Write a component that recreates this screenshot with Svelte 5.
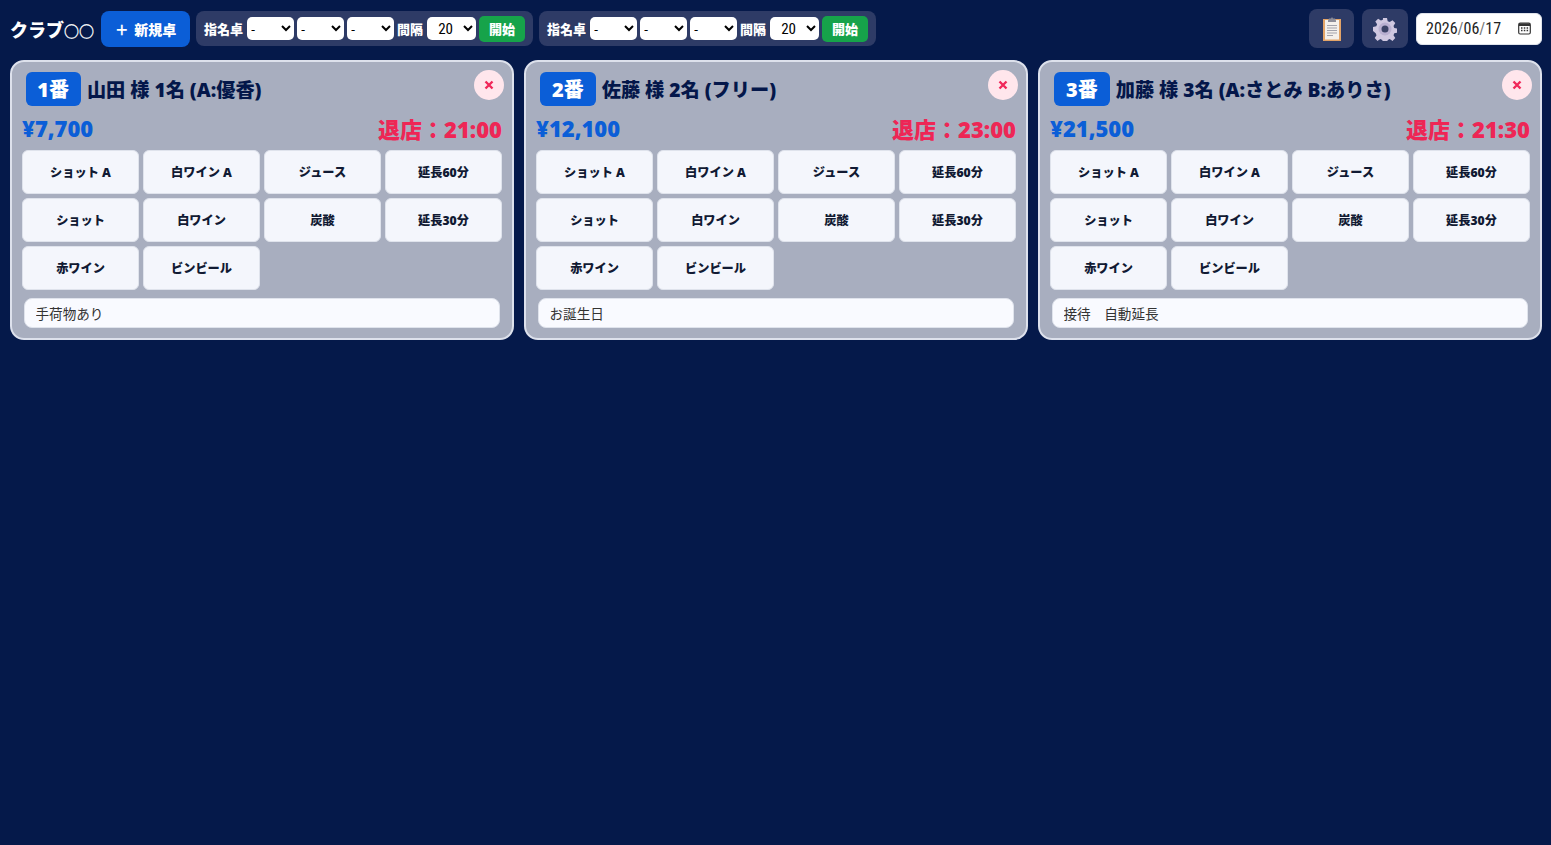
<script>
	const tables = [
		{ no: 1, name: '山田 様 1名 (A:優香)', price: '¥7,700', leave: '退店：21:00', memo: '手荷物あり' },
		{ no: 2, name: '佐藤 様 2名 (フリー)', price: '¥12,100', leave: '退店：23:00', memo: 'お誕生日' },
		{ no: 3, name: '加藤 様 3名 (A:さとみ B:ありさ)', price: '¥21,500', leave: '退店：21:30', memo: '接待　自動延長' }
	];
	const items = ['ショット A', '白ワイン A', 'ジュース', '延長60分', 'ショット', '白ワイン', '炭酸', '延長30分', '赤ワイン', 'ビンビール'];
</script>

<div class="page">
	<header class="topbar">
		<span class="title">クラブ<span class="marks">○○</span></span>
		<button class="new-btn">＋ 新規卓</button>
		{#each [0, 1] as g}
			<div class="group">
				<span class="label">指名卓</span>
				{#each [0, 1, 2] as s}
					<select class="sel"><option>-</option></select>
				{/each}
				<span class="label">間隔</span>
				<select class="sel small"><option>20</option></select>
				<button class="start">開始</button>
			</div>
		{/each}
		<button class="icon-btn first" aria-label="記録">
			<svg width="20" height="24" viewBox="0 0 20 24">
				<rect x="1" y="2" width="18" height="22" fill="#e3a468" />
				<rect x="3" y="3" width="14" height="19.500" fill="#f4f0ec" />
				<path d="M6 3.500 L7 1.500 H9 L10 0 L11 1.500 H13 L14 3.500 V5 H6Z" fill="#8d8d99" />
				<path d="M5 8.500H15M5 11H15M5 13.500H15M5 16H15M5 18.500H11" stroke="#a3a3ad" stroke-width="1" />
			</svg>
		</button>
		<button class="icon-btn" aria-label="設定">
			<svg width="24" height="24" viewBox="0 0 24 24">
				<path d="M10 1h4l.7 3.300 2 .8 2.800-1.800 2.800 2.800-1.800 2.800.8 2 3.300.7v4l-3.300.7-.8 2 1.800 2.800-2.800 2.800-2.800-1.800-2 .8-.7 3.300h-4l-.7-3.300-2-.8-2.800 1.800-2.800-2.800 1.800-2.800-.8-2L0 14v-4l3.300-.7.800-2L2.300 4.500l2.800-2.800 2.800 1.800 2-.8z" fill="#cfc8e0" />
				<circle cx="12" cy="12" r="6.500" fill="#b9b0d0" />
				<circle cx="12" cy="12" r="3.500" fill="#3b4366" />
			</svg>
		</button>
		<div class="date">
			<span class="date-text">2026<i>/</i>06<i>/</i>17</span>
			<svg width="13" height="13" viewBox="0 0 13 13">
				<rect x="0.700" y="1.200" width="11.600" height="10.800" rx="1.500" fill="none" stroke="#333" stroke-width="1.200" />
				<rect x="1" y="1.500" width="11" height="2.500" fill="#333" />
				<path d="M3 6h1.500M5.800 6h1.500M8.600 6h1.500M3 8.500h1.500M5.800 8.500h1.500M8.600 8.500h1.500" stroke="#333" stroke-width="1.300" />
			</svg>
		</div>
	</header>

	<main class="cards">
		{#each tables as t}
			<section class="card">
				<button class="close" aria-label="閉じる">
					<svg width="10" height="10" viewBox="0 0 10 10">
						<path d="M1.500 1.500L8.500 8.500M8.500 1.500L1.500 8.500" stroke="#f0285a" stroke-width="2.400" />
					</svg>
				</button>
				<div class="head">
					<span class="no">{t.no}番</span>
					<span class="name">{t.name}</span>
				</div>
				<div class="summary">
					<span class="price">{t.price}</span>
					<span class="leave">{t.leave}</span>
				</div>
				<div class="items">
					{#each items as item}
						<button class="item">{item}</button>
					{/each}
				</div>
				<input class="memo" value={t.memo} />
			</section>
		{/each}
	</main>
</div>

<style>
	:global(body) {
		background: #05194a;
		font-family: "Noto Sans", "Noto Sans CJK JP", sans-serif;
	}
	.page {
		min-height: 845px;
		padding: 9px 9px 0 10px;
		box-sizing: border-box;
	}
	button {
		font-family: inherit;
		cursor: pointer;
	}
	.topbar {
		display: flex;
		align-items: center;
		height: 39px;
		margin-bottom: 12px;
	}
	.title {
		color: #fff;
		font-size: 18px;
		font-weight: 900;
		width: 85px;
		margin-right: 6px;
		white-space: nowrap;
	}
	.marks {
		font-size: 15px;
		font-weight: 700;
		-webkit-text-stroke: 0.3px #fff;
	}
	.new-btn {
		width: 89px;
		height: 36px;
		border: none;
		border-radius: 8px;
		background: #0b5ed7;
		color: #fff;
		font-size: 14px;
		font-weight: 900;
		word-spacing: 2px;
		padding: 0;
		margin-right: 6px;
	}
	.group {
		display: flex;
		align-items: center;
		gap: 3px;
		height: 35px;
		padding: 0 8px;
		margin-right: 6px;
		border-radius: 8px;
		background: #2e3b66;
		box-sizing: border-box;
		width: 337px;
	}
	.label {
		color: #fff;
		font-size: 13px;
		font-weight: 900;
		margin-right: 1px;
		white-space: nowrap;
	}
	.sel {
		width: 47px;
		height: 23px;
		border: none;
		border-radius: 5px;
		background-color: #fff;
		color: #000;
		font-family: "Noto Sans", sans-serif;
		font-size: 13px;
	}
	.small {
		width: 49px;
		font-family: "Roboto Condensed", "Noto Sans", sans-serif;
		font-size: 15px;
		text-align: center;
	}
	.start {
		width: 46px;
		height: 26px;
		border: none;
		border-radius: 5px;
		background: #16a34a;
		color: #fff;
		font-size: 13px;
		font-weight: 900;
		padding: 0;
	}
	.icon-btn {
		width: 46px;
		height: 39px;
		border: none;
		border-radius: 8px;
		background: #2e3b66;
		padding: 0;
		margin-right: 8px;
		display: flex;
		align-items: center;
		justify-content: center;
	}
	.icon-btn.first {
		margin-left: auto;
		width: 45px;
	}
	.date {
		width: 126px;
		height: 32px;
		background: #fff;
		border-radius: 6px;
		border: 1px solid #dfe3ea;
		box-sizing: border-box;
		display: flex;
		align-items: center;
		justify-content: space-between;
		padding: 0 10px 0 9px;
	}
	.date-text {
		font-family: "Roboto Condensed", "Noto Sans", sans-serif;
		font-size: 16px;
		color: #222;
	}
	.date-text i {
		font-style: normal;
		color: #777;
	}
	.cards {
		display: grid;
		grid-template-columns: repeat(3, 504px);
		gap: 10px;
	}
	.card {
		position: relative;
		height: 280px;
		box-sizing: border-box;
		border: 2px solid #dde1ec;
		border-radius: 14px;
		background: #a8aebf;
		padding: 10px;
	}
	.close {
		position: absolute;
		top: 8px;
		right: 8px;
		width: 30px;
		height: 30px;
		border: none;
		border-radius: 50%;
		background: #ffe6ec;
		padding: 0;
		display: flex;
		align-items: center;
		justify-content: center;
	}
	.head {
		display: flex;
		align-items: center;
		gap: 6px;
		margin-left: 4px;
		height: 34px;
	}
	.no {
		padding: 0 12px;
		height: 34px;
		line-height: 35px;
		text-align: center;
		border-radius: 6px;
		background: #0b5ed7;
		color: #fff;
		font-size: 20px;
		font-weight: 900;
		font-variant-numeric: proportional-nums;
	}
	.name {
		color: #04174a;
		font-size: 19.200px;
		font-weight: 900;
	}
	.summary {
		display: flex;
		justify-content: space-between;
		align-items: flex-start;
		height: 32px;
		margin: 6px 0;
		line-height: 32px;
		font-size: 22px;
		font-weight: 900;
	}
	.price {
		color: #0b5ed7;
	}
	.leave {
		color: #ee2655;
		margin-top: 1px;
	}
	.items {
		display: grid;
		grid-template-columns: repeat(4, 117px);
		grid-auto-rows: 44px;
		gap: 4px;
	}
	.item {
		border: 1px solid #dfe3ec;
		border-radius: 6px;
		background: #f4f6fc;
		color: #111a33;
		font-size: 12.200px;
		font-weight: 900;
		padding: 0;
	}
	.memo {
		display: block;
		width: 476px;
		height: 30px;
		margin: 8px 2px 0;
		padding: 0 10.500px;
		box-sizing: border-box;
		border: 1px solid #dfe3ec;
		border-radius: 8px;
		background: #f9faff;
		color: #333;
		font-family: inherit;
		font-size: 13.600px;
	}
</style>
